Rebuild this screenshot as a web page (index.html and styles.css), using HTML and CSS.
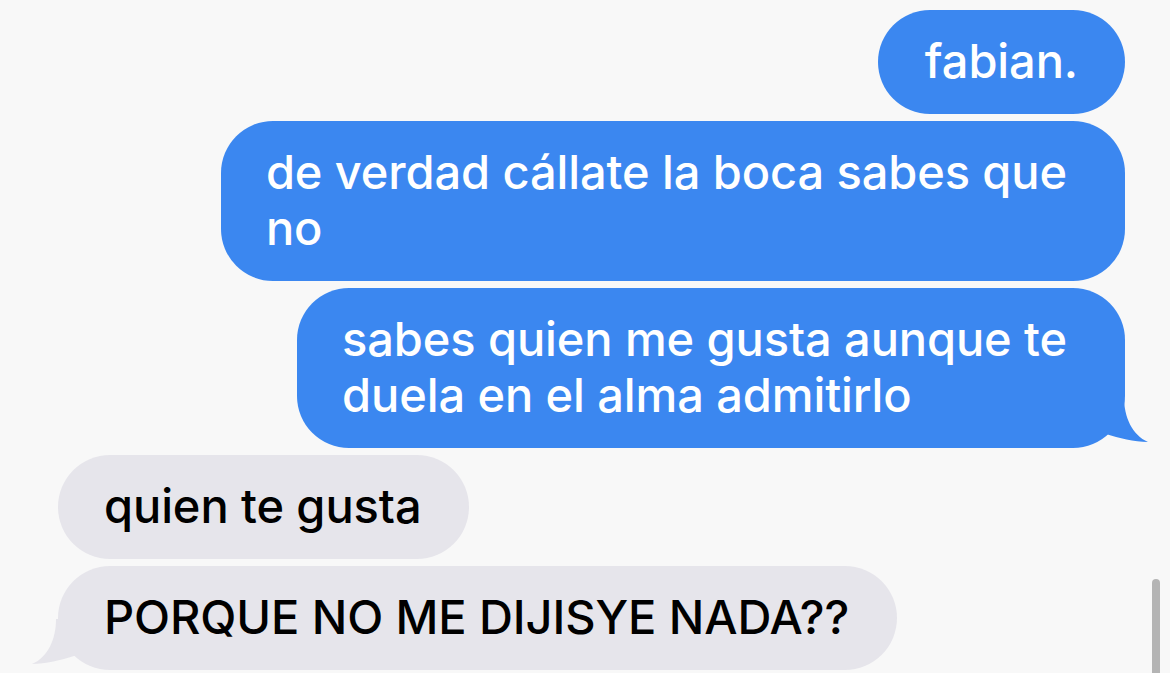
FILE: index.html
```html
<!DOCTYPE html>
<html lang="es">
<head>
<meta charset="utf-8">
<title>Mensajes</title>
<link rel="stylesheet" href="styles.css">
</head>
<body>
<main class="thread">
  <div class="bubble sent">fabian.</div>
  <div class="bubble sent wide">de verdad cállate la boca sabes que<br>no</div>
  <div class="bubble sent wide tailed">sabes quien me gusta aunque te<br>duela en el alma admitirlo
    <svg class="tail tail-right" viewBox="0 0 46 48" width="46" height="48"><path d="M0 0 L21 0 C21 20 29 38 45 45 C31 45 16 41 3 37 L0 37 Z" fill="#3b87f0"/></svg>
  </div>
  <div class="bubble received">quien te gusta</div>
  <div class="bubble received tailed">PORQUE NO ME DIJISYE NADA??
    <svg class="tail tail-left" viewBox="0 0 46 48" width="46" height="48"><path d="M46 0 L25 0 C25 20 17 38 1 45 C15 45 30 41 43 37 L46 37 Z" fill="#e6e5eb"/></svg>
  </div>
</main>
<div class="scrollbar"></div>
</body>
</html>
```
FILE: styles.css
```css
html, body {
  margin: 0;
  padding: 0;
  background: #f8f8f8;
  height: 100%;
  overflow: hidden;
}
body {
  font-family: Inter, "Noto Sans", "DejaVu Sans", sans-serif;
  position: relative;
}
.thread {
  display: flex;
  flex-direction: column;
  gap: 7px;
  padding: 10px 45px 0 58px;
}
.bubble {
  position: relative;
  font-size: 47px;
  font-weight: 540;
  line-height: 56px;
  letter-spacing: -0.1px;
  padding: 23px 47px 25px;
  border-radius: 52px;
  width: max-content;
  box-sizing: border-box;
}
.sent {
  align-self: flex-end;
  background: #3b87f0;
  color: #ffffff;
}
.sent.wide {
  padding-left: 45px;
  padding-right: 58px;
}
.received {
  align-self: flex-start;
  background: #e6e5eb;
  color: #000000;
  padding-left: 46px;
  padding-right: 48px;
}
.tail {
  position: absolute;
  bottom: 3px;
}
.tail-right {
  right: -24px;
}
.tail-left {
  left: -27px;
}
.scrollbar {
  position: absolute;
  right: 10px;
  bottom: 0;
  width: 8px;
  height: 94px;
  border-radius: 4px 4px 0 0;
  background: #b4b4b4;
}
```
